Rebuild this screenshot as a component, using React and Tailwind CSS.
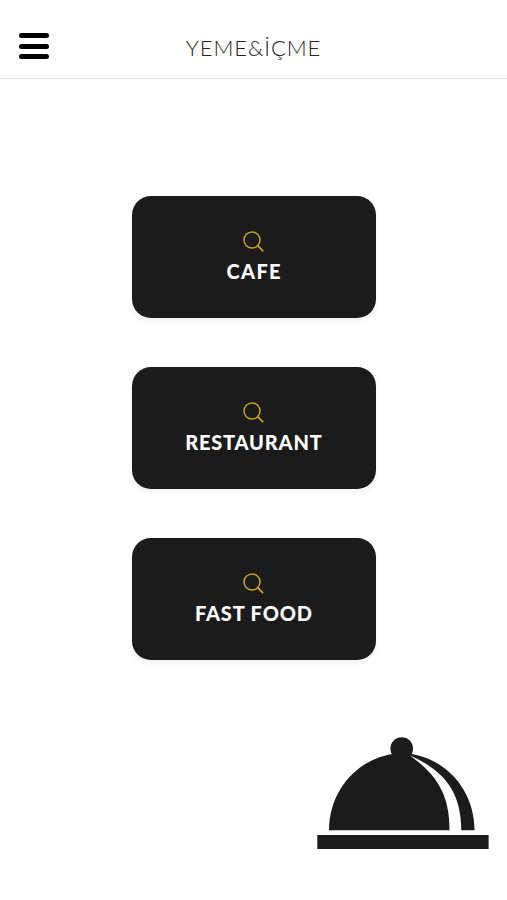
const categories = [
  { name: "CAFE", tracking: "tracking-[1.4px] -mr-[1.4px]" },
  { name: "RESTAURANT", tracking: "tracking-[0.8px] -mr-[0.8px]" },
  { name: "FAST FOOD", tracking: "tracking-[0.85px] -mr-[0.85px]" },
];

function SearchIcon() {
  return (
    <svg className="block h-[22px] w-[22px]" viewBox="0 0 22 22" fill="none" stroke="#c9a21c" strokeWidth="1.5">
      <circle cx="9" cy="9" r="8" />
      <path d="M14.7 14.7l5 5" strokeWidth="1.8" strokeLinecap="round" />
    </svg>
  );
}

function Cloche() {
  return (
    <svg className="block h-[113px] w-[172px]" viewBox="0 0 172 113" fill="#1b1b1b">
      <circle cx="84.7" cy="12.5" r="11.3" />
      <path d="M12 94.3C12 53 42 22 78 17.5L93 19.5C118 38 132.5 56 132.5 94.3Z" />
      <path d="M91 17.5C129 22 157.5 54 157.5 94.3H144.3C144.3 55 126 34 93 19.5Z" />
      <rect x="0.3" y="99" width="171.3" height="14" />
    </svg>
  );
}

export default function App() {
  return (
    <div className="flex h-[900px] w-[507px] flex-col overflow-hidden bg-white font-['Lato',sans-serif]">
      <header className="grid h-[79px] shrink-0 grid-cols-[127px_1fr_127px] border-b border-[#dedede]">
        <button aria-label="Menu" className="ml-[19px] mt-[33px] flex h-[26px] w-[30px] flex-col justify-between">
          <span className="h-[5px] w-full rounded-full bg-black" />
          <span className="h-[5px] w-full rounded-full bg-black" />
          <span className="h-[5px] w-full rounded-full bg-black" />
        </button>
        <h1 className="mt-[34px] text-center text-[22px] font-light leading-[28px] tracking-[0.9px] text-[#222]">YEME&amp;İÇME</h1>
      </header>
      <main className="mt-[117px] flex flex-col items-center gap-[49px]">
        {categories.map(({ name, tracking }) => (
          <button
            key={name}
            className="flex h-[122px] w-[244px] flex-col items-center rounded-[19px] bg-[#1b1b1b] pt-[35px] shadow-[0_3px_6px_rgba(0,0,0,0.06)]"
          >
            <SearchIcon />
            <span className={`mt-[6px] whitespace-nowrap text-[20px] font-black leading-[24px] text-white ${tracking}`}>{name}</span>
          </button>
        ))}
      </main>
      <footer className="mt-auto mb-[51px] mr-[18px] flex justify-end">
        <Cloche />
      </footer>
    </div>
  );
}
